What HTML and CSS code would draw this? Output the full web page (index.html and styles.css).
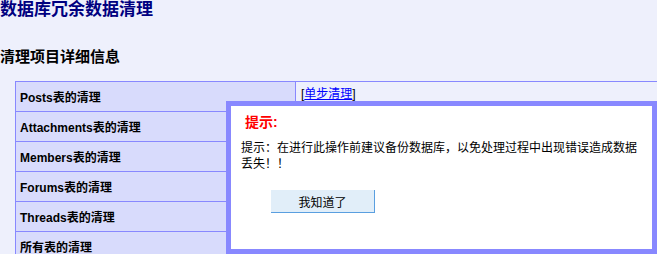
FILE: index.html
```html
<!DOCTYPE html>
<html lang="zh-CN">
<head>
    <meta charset="UTF-8">
    <title>数据库冗余数据清理</title>
    <link rel="stylesheet" href="styles.css">
</head>
<body>

<h1 class="page-title">数据库冗余数据清理</h1>
<h2 class="section-title">清理项目详细信息</h2>

<div class="clean-list">
    <div class="clean-row">
        <div class="clean-name">Posts表的清理</div>
        <div class="clean-action">[<a href="#">单步清理</a>]</div>
    </div>
    <div class="clean-row">
        <div class="clean-name">Attachments表的清理</div>
        <div class="clean-action"></div>
    </div>
    <div class="clean-row">
        <div class="clean-name">Members表的清理</div>
        <div class="clean-action"></div>
    </div>
    <div class="clean-row">
        <div class="clean-name">Forums表的清理</div>
        <div class="clean-action"></div>
    </div>
    <div class="clean-row">
        <div class="clean-name">Threads表的清理</div>
        <div class="clean-action"></div>
    </div>
    <div class="clean-row">
        <div class="clean-name">所有表的清理</div>
        <div class="clean-action"></div>
    </div>
</div>

<div class="notice-box">
    <div class="notice-title">提示:</div>
    <div class="notice-text">提示：在进行此操作前建议备份数据库，以免处理过程中出现错误造成数据丢失！！</div>
    <button class="notice-button">我知道了</button>
</div>

</body>
</html>
```

FILE: styles.css
```css
body {
    margin: 0;
    background-color: #eef0fc;
    font-family: "Liberation Sans", "Noto Sans CJK SC", sans-serif;
    font-size: 12px;
    color: #000;
    overflow: hidden;
    position: relative;
    height: 254px;
}
.page-title {
    margin: 0;
    font-size: 17px;
    line-height: 20px;
    color: #000080;
    font-weight: bold;
}
.section-title {
    margin: 27px 0 14px 0;
    font-size: 15px;
    line-height: 20px;
    font-weight: bold;
}
.clean-list {
    margin-left: 15px;
    width: 660px;
}
.clean-row {
    display: flex;
    height: 30px;
    box-sizing: border-box;
    border-top: 1px solid #8888ff;
}
.clean-name {
    width: 279px;
    flex-shrink: 0;
    border-left: 1px solid #8888ff;
    border-right: 1px solid #8888ff;
    background-color: #d8dbfc;
    padding-left: 4px;
    box-sizing: border-box;
    width: 281px;
    font-weight: bold;
    display: flex;
    align-items: center;
}
.clean-action {
    flex: 1;
    padding-left: 5px;
    padding-top: 5px;
    line-height: 14px;
}
.clean-action a {
    color: #0000ff;
}
.notice-box {
    position: absolute;
    left: 226px;
    top: 101px;
    width: 421px;
    height: 143px;
    border: 5px solid #8888ff;
    background-color: #fff;
}
.notice-title {
    margin: 6px 0 0 14px;
    font-size: 14px;
    line-height: 20px;
    font-weight: bold;
    color: #ff0000;
}
.notice-text {
    margin: 7px 0 0 10px;
    width: 400px;
    line-height: 16px;
    font-family: "Noto Sans CJK SC", sans-serif;
}
.notice-button {
    display: block;
    margin: 19px 0 0 40px;
    width: 104px;
    height: 23px;
    padding: 0;
    border: none;
    border-right: 1px solid #5a9fe0;
    border-bottom: 1px solid #5a9fe0;
    background-color: #e1eef9;
    font-family: "Noto Sans CJK SC", sans-serif;
    font-size: 12px;
    color: #000;
}
```
